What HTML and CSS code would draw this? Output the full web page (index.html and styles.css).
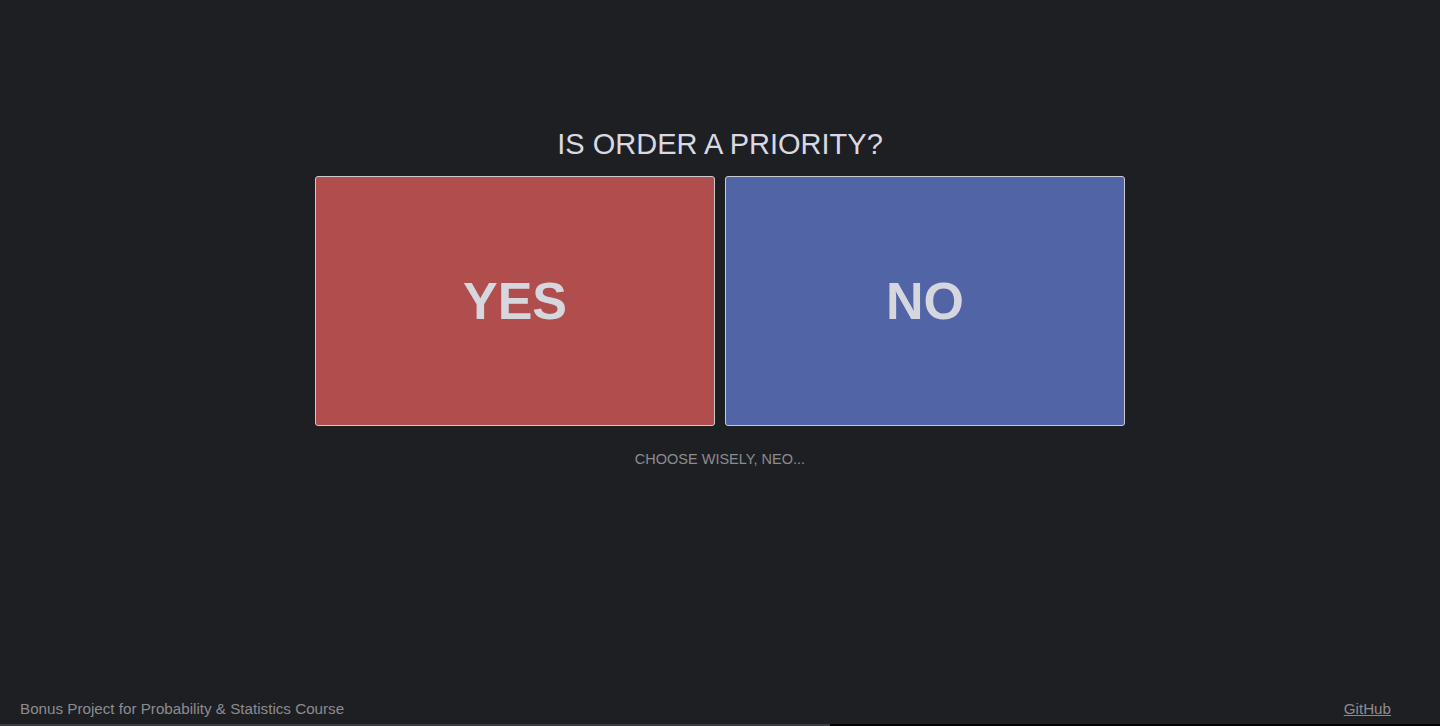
FILE: index.html
```html
<!DOCTYPE html>
<html>
<head>
<meta charset="utf-8">
<link rel="stylesheet" href="styles.css">
</head>
<body>
<main class="main">
  <h1 class="title">IS ORDER A PRIORITY?</h1>
  <div class="choices">
    <button class="choice choice-yes">YES</button>
    <button class="choice choice-no">NO</button>
  </div>
  <p class="hint">CHOOSE WISELY, NEO...</p>
</main>
<footer class="footer">
  <span class="footer-text">Bonus Project for Probability &amp; Statistics Course</span>
  <a class="footer-link" href="#">GitHub</a>
</footer>
<div class="bottom-strip"></div>
</body>
</html>
```

FILE: styles.css
```css
html, body {
  margin: 0;
  padding: 0;
  height: 100%;
}
body {
  background: #1e1f23;
  font-family: "Liberation Sans", Arial, sans-serif;
  display: flex;
  flex-direction: column;
  overflow: hidden;
}
.main {
  flex: 1;
  display: flex;
  flex-direction: column;
  align-items: center;
  padding-top: 126px;
}
.title {
  margin: 0;
  font-size: 29px;
  font-weight: normal;
  color: #d9d9e2;
  line-height: 37px;
  height: 50px;
}
.choices {
  display: flex;
  gap: 10px;
}
.choice {
  width: 400px;
  height: 250px;
  border: 1px solid #c9c9cf;
  border-radius: 3px;
  font-family: "Liberation Sans", Arial, sans-serif;
  font-weight: bold;
  font-size: 52px;
  color: #d6d6de;
  padding: 0;
  cursor: pointer;
}
.choice-yes { background: #b04d4d; }
.choice-no { background: #5064a6; }
.hint {
  margin: 25px 0 0;
  font-size: 14.5px;
  color: #8b8c91;
}
.footer {
  display: flex;
  justify-content: space-between;
  padding: 0 49px 6px 20px;
  font-size: 15.2px;
  line-height: 18px;
  color: #8c8c90;
}
.footer-link {
  color: #8c8c90;
}
.bottom-strip {
  height: 2px;
  background: linear-gradient(to right, #3a3b3f 0, #3a3b3f 830px, #000 830px);
}
```
